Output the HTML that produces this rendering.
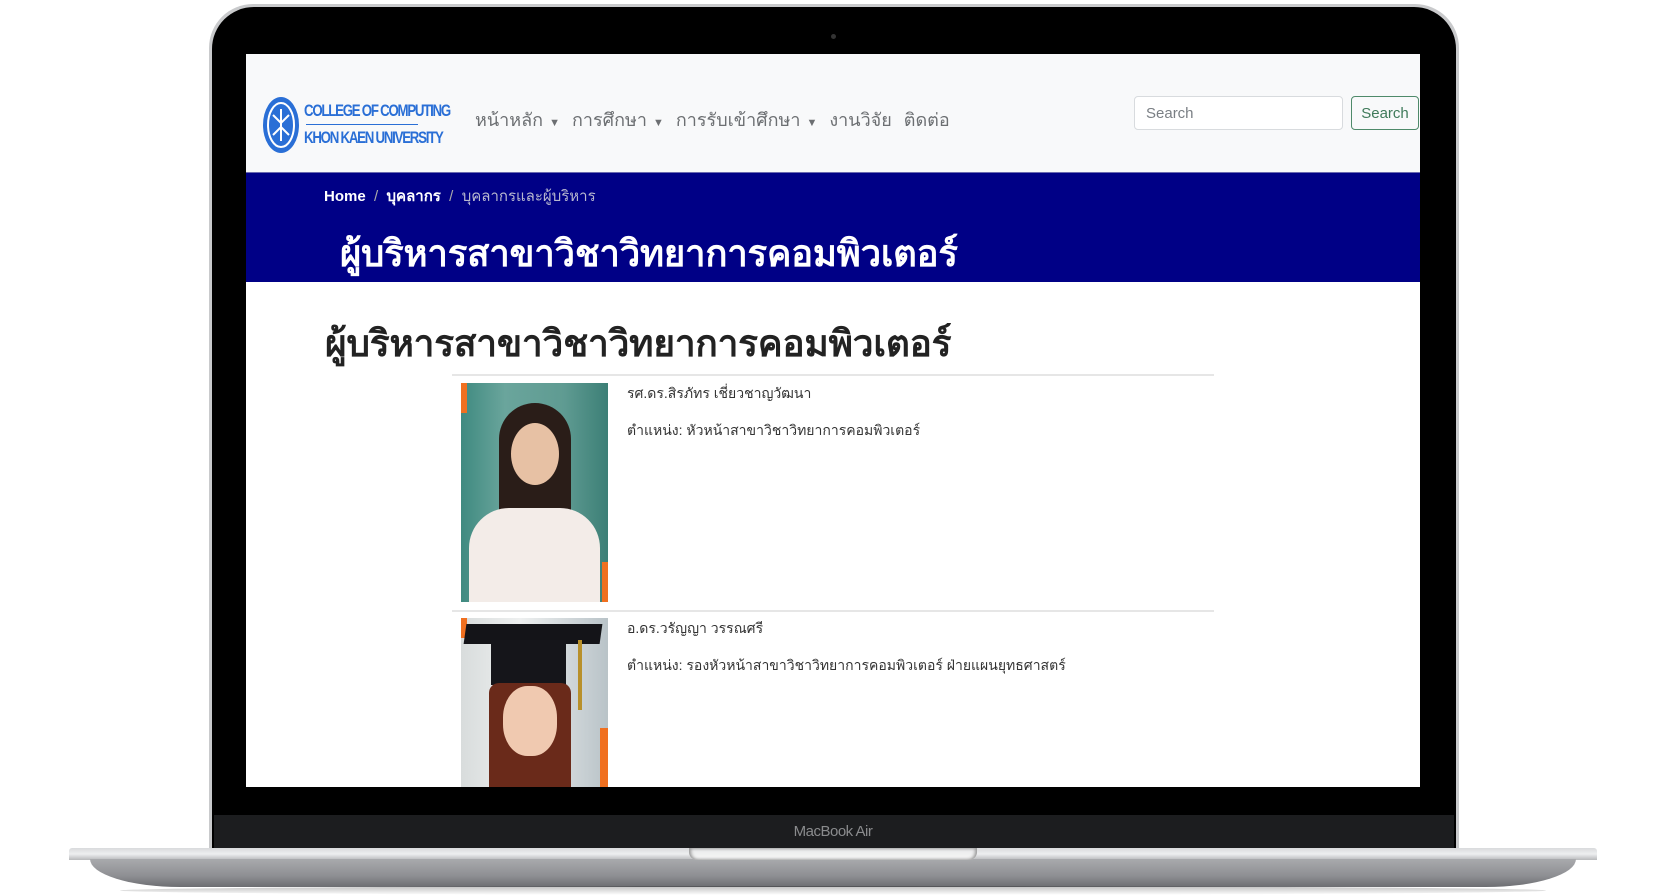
<!DOCTYPE html>
<html><head><meta charset="utf-8"><style>
*{margin:0;padding:0;box-sizing:border-box}
body{width:1666px;height:895px;background:#fff;position:relative;overflow:hidden;font-family:"Liberation Sans","Noto Sans CJK SC",sans-serif}
.abs{position:absolute}
.th{font-family:"Liberation Sans","Noto Sans CJK SC","WenQuanYi Zen Hei",sans-serif}
</style></head><body>
<div class="abs" style="left:209px;top:4px;width:1250px;height:850px;border-radius:44px 44px 0 0;background:#c9cacc;"></div>
<div class="abs" style="left:212px;top:7px;width:1244px;height:845px;border-radius:42px 42px 0 0;background:#000;"></div>
<div class="abs" style="left:831px;top:34px;width:5px;height:5px;border-radius:50%;background:#333;"></div>
<div class="abs" style="left:214px;top:815px;width:1240px;height:35px;background:#1c1d1f;"></div>
<div class="abs" style="left:0;top:823px;width:1666px;text-align:center;color:#8a8b8d;font-size:15px;letter-spacing:-0.5px">MacBook Air</div>
<div class="abs" style="left:69px;top:848px;width:1528px;height:12px;background:linear-gradient(#d9dadc,#eeeff0 50%,#b8b9bb);border-radius:3px 3px 0 0"></div>
<div class="abs" style="left:90px;top:859px;width:1486px;height:28px;background:linear-gradient(#a9aaad,#8e8f93 60%,#6c6d71);border-radius:0 0 90px 90px / 0 0 28px 28px"></div>
<div class="abs" style="left:689px;top:848px;width:288px;height:12px;background:linear-gradient(#e8e9ea,#f7f7f7);border-radius:0 0 8px 8px;box-shadow:inset 2px 0 3px #999,inset -2px 0 3px #999"></div>
<div class="abs" style="left:120px;top:886px;width:1426px;height:9px;background:linear-gradient(rgba(0,0,0,.25),rgba(0,0,0,0));border-radius:50%"></div>

<div class="abs" style="left:246px;top:54px;width:1174px;height:733px;background:#fff;overflow:hidden">
  <div class="abs" style="left:0;top:0;width:1174px;height:118px;background:#f8f9fa"></div>
  <svg class="abs" style="left:15px;top:41px" width="40" height="60" viewBox="0 0 40 60">
    <ellipse cx="20" cy="30" rx="18" ry="28" fill="#2a6fd6"/>
    <ellipse cx="20" cy="30" rx="13" ry="22" fill="none" stroke="#fff" stroke-width="2"/>
    <path d="M12 20 L20 28 L28 20 M12 40 L20 32 L28 40 M20 14 V46" stroke="#fff" stroke-width="2" fill="none"/>
  </svg>
  <div class="abs" style="left:58px;top:43px;color:#2a6fd6;font-weight:bold;font-size:17px;line-height:27px;letter-spacing:-1.6px;transform:scaleX(.78);transform-origin:left">COLLEGE OF COMPUTING<br>KHON KAEN UNIVERSITY</div>
  <div class="abs" style="left:60px;top:70px;width:112px;height:1px;background:#2a6fd6"></div>
  <div class="abs th" style="left:229px;top:51px;font-size:18px;color:#6c6f72;white-space:nowrap;word-spacing:1px">หน้าหลัก <span style="font-size:11px">▼</span>&nbsp; การศึกษา <span style="font-size:11px">▼</span>&nbsp; การรับเข้าศึกษา <span style="font-size:11px">▼</span>&nbsp; งานวิจัย &nbsp;ติดต่อ</div>
  <div class="abs" style="left:888px;top:42px;width:209px;height:34px;border:1px solid #d8dbde;border-radius:4px;background:#fff;color:#7a7f84;font-size:15px;padding:8px 11px">Search</div>
  <div class="abs" style="left:1105px;top:42px;width:68px;height:34px;border:1px solid #4e8a6a;border-radius:4px;color:#3f7a5a;font-size:15px;padding:8px 0;text-align:center">Search</div>
  <div class="abs" style="left:0;top:118px;width:1174px;height:110px;background:#000086;border-top:1px solid #6a6ab0"></div>
  <div class="abs th" style="left:78px;top:130px;font-size:15px;color:#fff;font-weight:bold;white-space:nowrap">Home <span style="color:#aaa;font-weight:normal">&nbsp;/&nbsp;</span> บุคลากร <span style="color:#aaa;font-weight:normal">&nbsp;/&nbsp;</span> <span style="color:#b8b8cf;font-weight:normal">บุคลากรและผู้บริหาร</span></div>
  <div class="abs th" style="left:94px;top:171px;font-size:36.5px;color:#fff;font-weight:bold;white-space:nowrap;letter-spacing:-0.2px">ผู้บริหารสาขาวิชาวิทยาการคอมพิวเตอร์</div>
  <div class="abs th" style="left:79px;top:260px;font-size:37px;color:#222;font-weight:bold;white-space:nowrap;letter-spacing:-0.2px">ผู้บริหารสาขาวิชาวิทยาการคอมพิวเตอร์</div>
  <div class="abs" style="left:206px;top:320px;width:762px;height:2px;background:#e6e6e6"></div>
  <div class="abs" style="left:215px;top:329px;width:147px;height:219px;background:linear-gradient(90deg,#3f8a80,#6aa59c 30%,#5f9b92 70%,#3c7f76);overflow:hidden">
    <div class="abs" style="left:0;top:0;width:6px;height:30px;background:#f07020"></div>
    <div class="abs" style="right:0;bottom:0;width:6px;height:40px;background:#f07020"></div>
    <div class="abs" style="left:38px;top:20px;width:72px;height:120px;border-radius:40px 40px 10px 10px;background:#2a1d18"></div>
    <div class="abs" style="left:50px;top:40px;width:48px;height:62px;border-radius:50%;background:#e7c1a4"></div>
    <div class="abs" style="left:8px;top:125px;width:131px;height:110px;border-radius:40px 40px 0 0;background:#f3ece8"></div>
  </div>
  <div class="abs th" style="left:381px;top:329px;font-size:14px;color:#333;white-space:nowrap">รศ.ดร.สิรภัทร เชี่ยวชาญวัฒนา</div>
  <div class="abs th" style="left:381px;top:366px;font-size:14px;color:#333;white-space:nowrap">ตำแหน่ง: หัวหน้าสาขาวิชาวิทยาการคอมพิวเตอร์</div>
  <div class="abs" style="left:206px;top:556px;width:762px;height:2px;background:#e6e6e6"></div>
  <div class="abs" style="left:215px;top:564px;width:147px;height:175px;background:linear-gradient(90deg,#d8dcdc,#eef0f0 40%,#b9c3c8);overflow:hidden">
    <div class="abs" style="left:0;top:0;width:6px;height:20px;background:#f07020"></div>
    <div class="abs" style="right:0;top:110px;width:8px;height:70px;background:#f07020"></div>
    <div class="abs" style="left:4px;top:6px;width:136px;height:20px;background:#141418;transform:skewX(-8deg)"></div>
    <div class="abs" style="left:30px;top:22px;width:75px;height:45px;background:#15151a"></div>
    <div class="abs" style="left:117px;top:22px;width:4px;height:70px;background:#b8902a"></div>
    <div class="abs" style="left:28px;top:65px;width:82px;height:120px;border-radius:10px 10px 0 0;background:#6a2a1a"></div>
    <div class="abs" style="left:42px;top:68px;width:54px;height:70px;border-radius:45%;background:#f0c9b0"></div>
  </div>
  <div class="abs th" style="left:381px;top:564px;font-size:14px;color:#333;white-space:nowrap">อ.ดร.วรัญญา วรรณศรี</div>
  <div class="abs th" style="left:381px;top:601px;font-size:14px;color:#333;white-space:nowrap">ตำแหน่ง: รองหัวหน้าสาขาวิชาวิทยาการคอมพิวเตอร์ ฝ่ายแผนยุทธศาสตร์</div>
</div>
</body></html>
